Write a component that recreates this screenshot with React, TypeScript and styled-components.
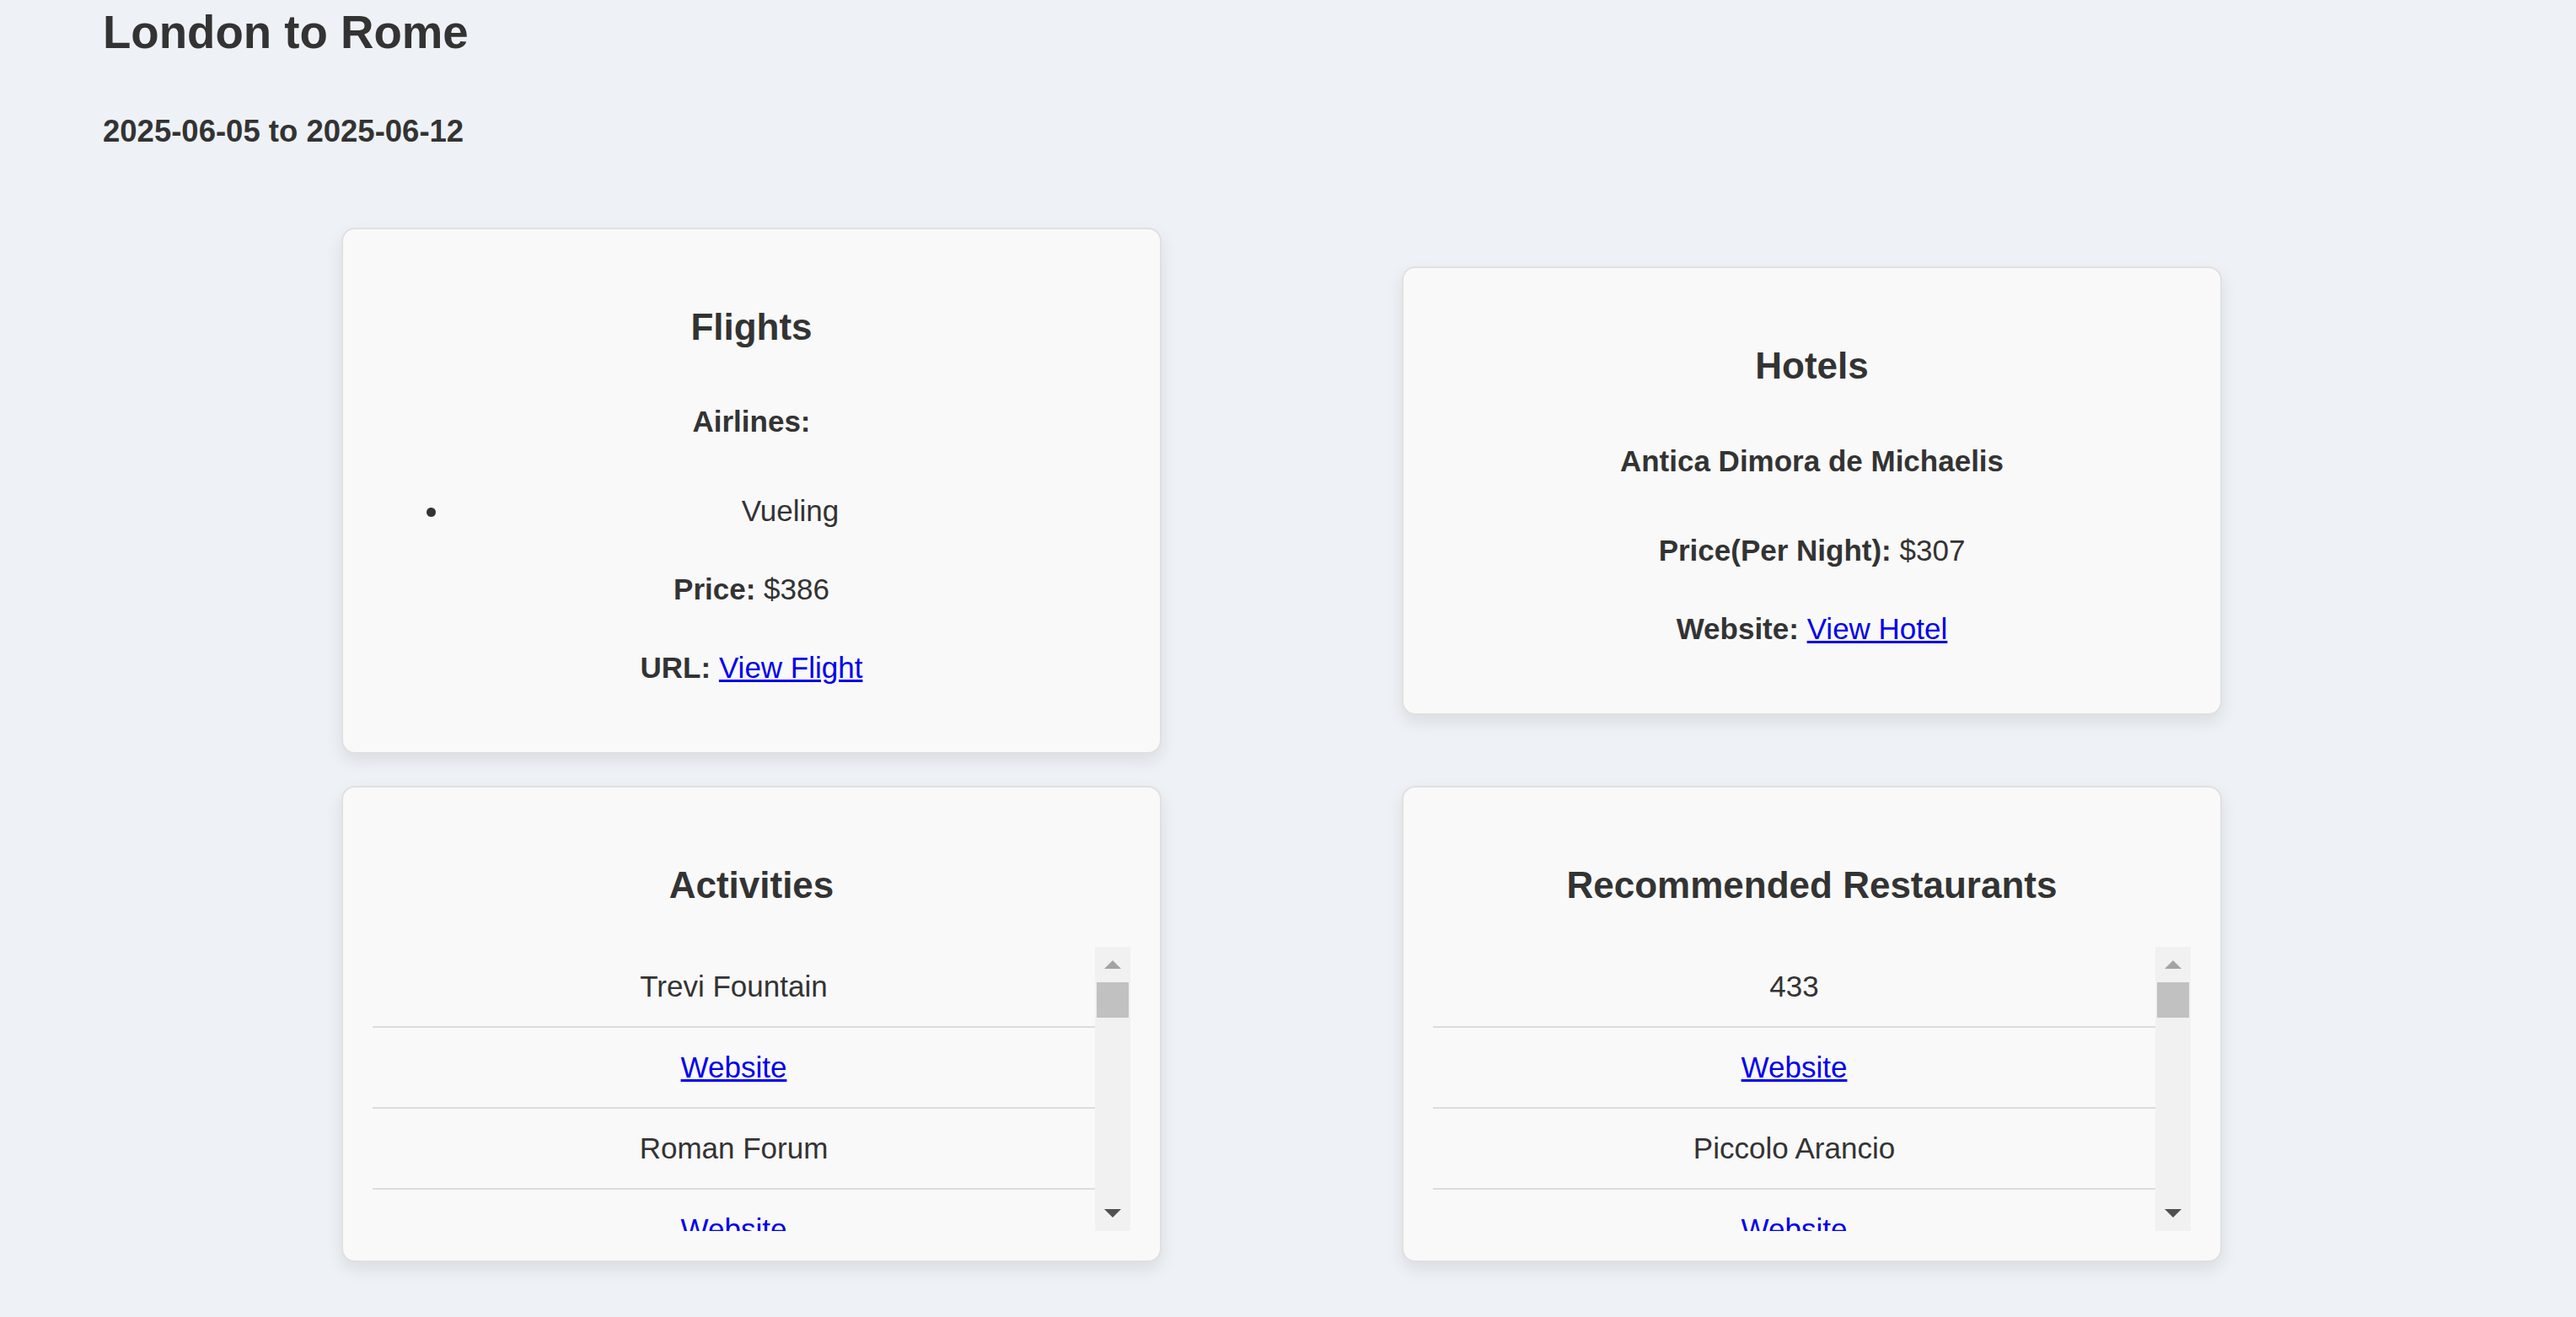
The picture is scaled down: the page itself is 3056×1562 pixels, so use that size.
import styled, { createGlobalStyle } from "styled-components";

interface Place {
  name: string;
  url: string;
}

const activities: Place[] = [
  { name: "Trevi Fountain", url: "#" },
  { name: "Roman Forum", url: "#" },
  { name: "Colosseum", url: "#" },
  { name: "Pantheon", url: "#" },
  { name: "Vatican Museums", url: "#" },
  { name: "Spanish Steps", url: "#" },
  { name: "Borghese Gallery", url: "#" },
  { name: "Piazza Navona", url: "#" },
  { name: "Castel Sant'Angelo", url: "#" },
  { name: "Trastevere", url: "#" },
];

const restaurants: Place[] = [
  { name: "433", url: "#" },
  { name: "Piccolo Arancio", url: "#" },
  { name: "Roscioli", url: "#" },
  { name: "Da Enzo al 29", url: "#" },
  { name: "Armando al Pantheon", url: "#" },
  { name: "Pizzeria Da Remo", url: "#" },
  { name: "Trattoria Da Teo", url: "#" },
  { name: "Felice a Testaccio", url: "#" },
  { name: "Pierluigi", url: "#" },
  { name: "Il Sorpasso", url: "#" },
];

// the screenshot browser hides native scrollbars, so the bar is drawn
const FakeScrollbar = () => (
  <Scrollbar>
    <ArrowButton $dir="up" $color="#a3a3a3" />
    <Thumb />
    <TrackSpace />
    <ArrowButton $dir="down" $color="#505050" />
  </Scrollbar>
);

const PlaceList = ({ items }: { items: Place[] }) => (
  <ListFrame>
    <ScrollList>
      {items.map((item) => [
        <ScrollItem key={item.name}>{item.name}</ScrollItem>,
        <ScrollItem key={item.name + "-url"}>
          <Link href={item.url}>Website</Link>
        </ScrollItem>,
      ])}
    </ScrollList>
    <FakeScrollbar />
  </ListFrame>
);

const App = () => {
  return (
    <Page>
      <GlobalStyle />
      <Header>
        <Title>London to Rome</Title>
        <Dates>2025-06-05 to 2025-06-12</Dates>
      </Header>
      <Grid>
        <Card>
          <CardTitle>Flights</CardTitle>
          <Subhead>Airlines:</Subhead>
          <Bullets>
            <li>Vueling</li>
          </Bullets>
          <Line>
            <strong>Price:</strong> $386
          </Line>
          <Line>
            <strong>URL:</strong> <Link href="#">View Flight</Link>
          </Line>
        </Card>
        <Card>
          <CardTitle>Hotels</CardTitle>
          <Subhead>Antica Dimora de Michaelis</Subhead>
          <Line>
            <strong>Price(Per Night):</strong> $307
          </Line>
          <Line>
            <strong>Website:</strong> <Link href="#">View Hotel</Link>
          </Line>
        </Card>
        <Card>
          <CardTitle>Activities</CardTitle>
          <PlaceList items={activities} />
        </Card>
        <Card>
          <CardTitle>Recommended Restaurants</CardTitle>
          <PlaceList items={restaurants} />
        </Card>
      </Grid>
    </Page>
  );
};

export default App;

const GlobalStyle = createGlobalStyle`
  html, body {
    margin: 0;
    padding: 0;
    background: #eef2f6;
  }
  body {
    font-family: "Liberation Sans", Arial, sans-serif;
    color: #333;
  }
`;

const Page = styled.div`
  min-height: 100vh;
  box-sizing: border-box;
  padding: 8px 0 40px;
`;

const Header = styled.header`
  padding-left: 122px;
`;

const Title = styled.h1`
  margin: 0;
  font-size: 54.6px;
  line-height: 1.15;
  font-weight: bold;
`;

const Dates = styled.h3`
  margin: 64px 0 0;
  font-size: 36.5px;
  line-height: 1.15;
  font-weight: bold;
`;

const Grid = styled.div`
  display: grid;
  grid-template-columns: 973px 973px;
  column-gap: 285px;
  row-gap: 38px;
  align-items: center;
  margin: 93px 0 0 405px;
`;

const Card = styled.section`
  box-sizing: border-box;
  background: #f9f9f9;
  border: 2px solid #e0e0e0;
  border-radius: 16px;
  box-shadow: 0 8px 20px rgba(0, 0, 0, 0.09);
  padding: 35px;
  text-align: center;
`;

const CardTitle = styled.h2`
  margin: 46px 0 37px;
  font-size: 44px;
  line-height: 1.6;
  font-weight: bold;
`;

const Subhead = styled.p`
  margin: 49px 0 50px;
  font-size: 35px;
  line-height: 56px;
  font-weight: bold;
`;

const Line = styled.p`
  margin: 37px 0;
  font-size: 35px;
  line-height: 56px;
`;

const Bullets = styled.ul`
  margin: 37px 0;
  padding-left: 92px;
  font-size: 35px;
  line-height: 56px;
`;

const Link = styled.a`
  color: #0000ee;
  text-decoration: underline;
`;

const ListFrame = styled.div`
  display: flex;
  height: 337px;
`;

const ScrollList = styled.ul`
  flex: 1;
  list-style: none;
  margin: 0;
  padding: 0;
  overflow: hidden;
  font-size: 35px;
  line-height: 56px;
`;

const ScrollItem = styled.li`
  padding: 19px 0;
  border-bottom: 2px solid #dcdcdc;
`;

const Scrollbar = styled.div`
  flex: none;
  width: 42px;
  display: flex;
  flex-direction: column;
  align-items: center;
  background: #f1f1f1;
`;

const ArrowButton = styled.div<{ $dir: "up" | "down"; $color: string }>`
  width: 42px;
  height: 42px;
  display: flex;
  align-items: center;
  justify-content: center;

  &::after {
    content: "";
    border-left: 10px solid transparent;
    border-right: 10px solid transparent;
    ${({ $dir, $color }) =>
      $dir === "up"
        ? `border-bottom: 10px solid ${$color};`
        : `border-top: 10px solid ${$color};`}
  }
`;

const Thumb = styled.div`
  width: 38px;
  height: 42px;
  background: #c1c1c1;
`;

const TrackSpace = styled.div`
  flex: 1;
`;
